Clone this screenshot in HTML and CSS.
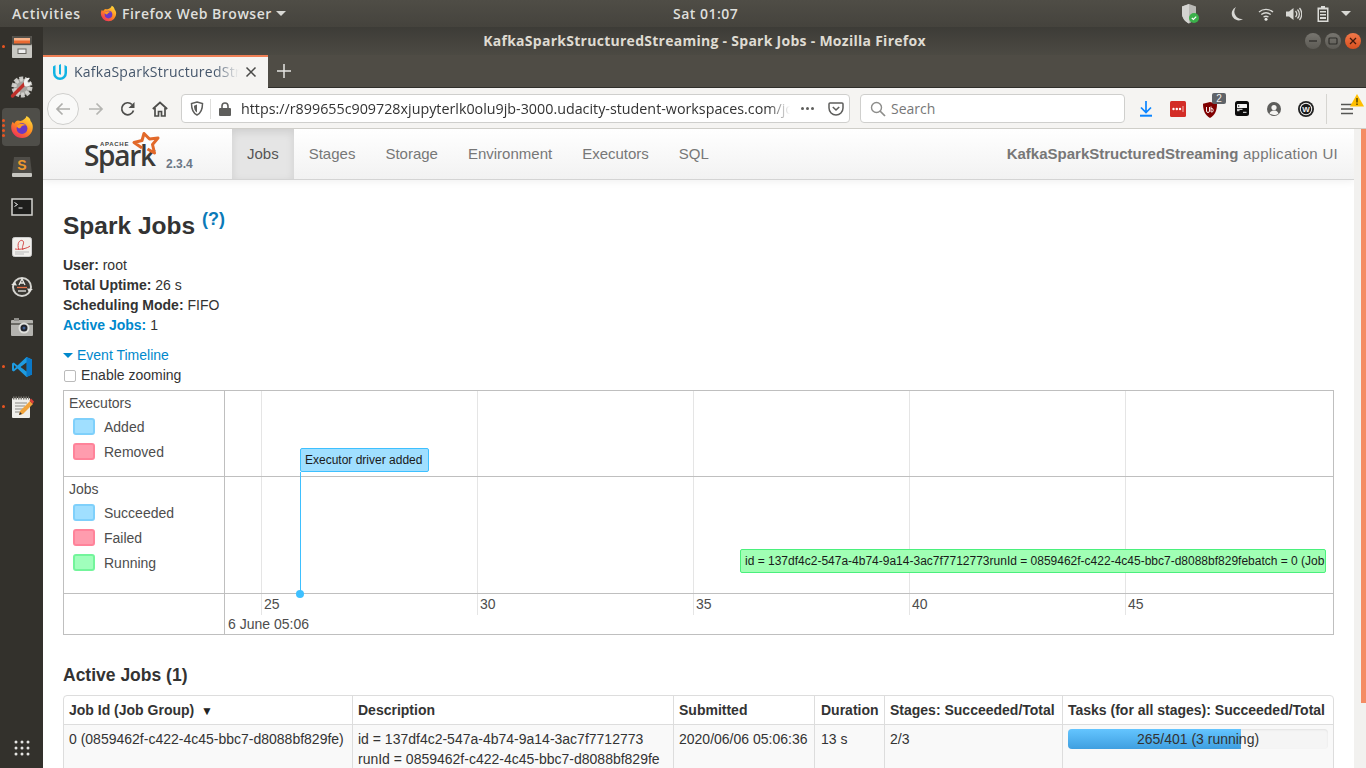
FILE: index.html
```html
<!DOCTYPE html>
<html lang="en">
<head>
<meta charset="utf-8">
<title>KafkaSparkStructuredStreaming - Spark Jobs</title>
<link rel="stylesheet" href="styles.css">
</head>
<body>
<header class="panel">
  <div class="panel-left">
    <span class="activities">Activities</span>
    <span class="appmenu">
      <svg class="ff-small" viewBox="0 0 24 24"><use href="#firefox"/></svg>
      <span>Firefox Web Browser</span>
      <i class="caret"></i>
    </span>
  </div>
  <div class="clock">Sat 01:07</div>
  <div class="tray">
    <svg class="tray-shield" width="20" height="22" viewBox="0 0 20 22"><path d="M9 1l7 2.500v7c0 4.500-3 8-7 10-4-2-7-5.500-7-10v-7z" fill="#b9b9b5"/><path d="M9 1v19.500c-4-2-7-5.500-7-10v-7z" fill="#d4d4d1"/><circle cx="14" cy="15" r="5" fill="#3bb04a"/><path d="M11.800 15l1.600 1.500 2.800-2.800" stroke="#fff" stroke-width="1.200" fill="none"/></svg>
    <svg class="tray-moon" width="14" height="16" viewBox="0 0 14 16"><path d="M6 1a7 7 0 1 0 7 12A7.500 7.500 0 0 1 6 1z" fill="#d8d8d4"/></svg>
    <svg class="tray-wifi" width="16" height="14" viewBox="0 0 16 14"><path d="M1 5c4-3.500 10-3.500 14 0M3.300 7.500c3-2.300 6.400-2.300 9.400 0M5.500 10c1.700-1 3.300-1 5 0" stroke="#d8d8d4" stroke-width="1.400" fill="none"/><circle cx="8" cy="12.300" r="1.500" fill="#e8e8e4"/></svg>
    <svg class="tray-vol" width="16" height="14" viewBox="0 0 16 14"><path d="M0 4.500h3L7.500 1v12L3 9.500H0z" fill="#d8d8d4"/><path d="M9.500 4c1.500 1.700 1.500 4.300 0 6M11.500 2.500c2.500 2.600 2.500 6.400 0 9M13.500 1c3 3.500 3 8.500 0 12" stroke="#d8d8d4" stroke-width="1.300" fill="none"/></svg>
    <svg class="tray-batt" width="12" height="16" viewBox="0 0 12 16"><path d="M4 0h4v1.500h3.500V16H.5V1.500H4z" fill="#dcdcd8"/><path d="M2 3.500h8v11H2z" fill="#44423c"/><path d="M3 5h6v1.500H3zM3 8h6v1.500H3zM3 11h6v2H3z" fill="#dcdcd8"/></svg>
    <i class="caret tray-caret"></i>
  </div>
</header>

<div class="desktop">
  <nav class="dock">
    <div class="dock-item has-dot">
      <svg width="22" height="24" viewBox="0 0 22 24"><rect x="1" y="1" width="20" height="22" rx="2" fill="#b5b4ae"/><rect x="1" y="1" width="20" height="9" rx="1.500" fill="#54514b"/><rect x="3" y="3" width="16" height="3" fill="#f8b48c"/><rect x="3" y="5.500" width="16" height="3" fill="#ea6a32"/><rect x="1" y="11" width="20" height="12" rx="1" fill="#c8c7c2"/><rect x="7" y="14" width="8" height="4.500" fill="#eee" stroke="#66645e"/></svg>
    </div>
    <div class="dock-item">
      <svg width="24" height="24" viewBox="0 0 24 24"><circle cx="12" cy="12" r="8" fill="none" stroke="#c8c7c3" stroke-width="5" stroke-dasharray="3.500 1.500"/><circle cx="12" cy="12" r="8.500" fill="#d5d4d0" opacity=".7"/><path d="M2.500 21L15 8.500" stroke="#c0302b" stroke-width="3.400" stroke-linecap="round"/><path d="M14 9a5 5 0 0 1 6-6l-3 3 1.500 2.500L21.500 7a5 5 0 0 1-7 4z" fill="#f2f2f0"/></svg>
    </div>
    <div class="dock-item is-active">
      <i class="run-dots"></i>
      <svg width="24" height="24" viewBox="0 0 24 24"><use href="#firefox"/></svg>
    </div>
    <div class="dock-item">
      <svg width="22" height="22" viewBox="0 0 22 22"><path d="M3 1h16l2 17H1z" fill="#4f4d48"/><rect x="1" y="17" width="20" height="4" rx="1" fill="#c6c5c0"/><text x="11" y="14" class="sublime-s">S</text></svg>
    </div>
    <div class="dock-item">
      <svg width="22" height="18" viewBox="0 0 22 18"><rect x="1" y="1" width="20" height="16" fill="#1e1e1c" stroke="#d5d4d0" stroke-width="1.500"/><path d="M3.500 4.500l3 2-3 2M7.500 10h4" stroke="#eee" fill="none"/></svg>
    </div>
    <div class="dock-item">
      <svg width="20" height="20" viewBox="0 0 20 20"><rect x=".5" y=".5" width="19" height="19" rx="2" fill="#f1efec" stroke="#ccc"/><path d="M3 12c6 1 13-1 15-3M7 13C4 5 9 2 11 4s-2 6 0 9" stroke="#d44a4a" fill="none"/><path d="M3 15h14M3 17h9" stroke="#bbb"/></svg>
    </div>
    <div class="dock-item">
      <svg width="22" height="22" viewBox="0 0 22 22"><circle cx="11" cy="11" r="9" fill="#3a3833" stroke="#d5d4d0" stroke-width="2"/><path d="M0 9l4-3 2 3.500zM22 13l-4 3-2-3.500z" fill="#e6e5e1"/><path d="M8 9l3-6 3 6M9.500 7h3" stroke="#e8e8e4" stroke-width="1.300" fill="none"/><path d="M6 11.500h10" stroke="#e8734a" stroke-width="1.300"/><path d="M7 15h8" stroke="#e8e8e4" stroke-width="1.300"/></svg>
    </div>
    <div class="dock-item">
      <svg width="22" height="18" viewBox="0 0 22 18"><rect y="2" width="22" height="16" rx="1" fill="#b4b3af"/><rect x="3" y="0" width="5" height="3" fill="#8f8e8a"/><rect y="5" width="22" height="2" fill="#6a6964"/><circle cx="13" cy="10" r="5.500" fill="#dfdfdc"/><circle cx="13" cy="10" r="3.500" fill="#22242c"/><circle cx="13" cy="10" r="1.500" fill="#3f5f92"/></svg>
    </div>
    <div class="dock-item has-dot">
      <svg width="22" height="22" viewBox="0 0 22 22"><path d="M15.500 1L21 3.500v15L15.500 21 6.500 12.500 2.800 15.500 1 14.500v-7l1.800-1 3.700 3z" fill="#1e9be0"/><path d="M15.500 1L21 3.500v15L15.500 21z" fill="#0a78c8"/><path d="M15.500 6.500v9L9.500 11zM3 9l2.200 2L3 13z" fill="#33312c"/></svg>
    </div>
    <div class="dock-item has-dot">
      <svg width="24" height="24" viewBox="0 0 24 24"><rect x="2" y="3" width="18" height="20" rx="1" fill="#efeeea"/><path d="M3 3h16" stroke="#77756f" stroke-width="3" stroke-dasharray="1.500 1"/><path d="M5 8h12M5 11h10M5 14h8M5 17h7" stroke="#8a8984"/><path d="M9 20l1-4L20 6l3 3-10 10z" fill="#f1a33b"/><path d="M19.500 5.500l1.500-2 3 3-1.500 2.500z" fill="#d9403a"/><path d="M9 20l1-3 2 2z" fill="#333"/></svg>
    </div>
    <div class="dock-item dock-apps">
      <svg width="16" height="16" viewBox="0 0 16 16" fill="#e5e5e3"><circle cx="2" cy="2" r="1.500"/><circle cx="8" cy="2" r="1.500"/><circle cx="14" cy="2" r="1.500"/><circle cx="2" cy="8" r="1.500"/><circle cx="8" cy="8" r="1.500"/><circle cx="14" cy="8" r="1.500"/><circle cx="2" cy="14" r="1.500"/><circle cx="8" cy="14" r="1.500"/><circle cx="14" cy="14" r="1.500"/></svg>
    </div>
  </nav>

  <div class="window">
    <div class="titlebar">
      <span></span>
      <span class="wintitle">KafkaSparkStructuredStreaming - Spark Jobs - Mozilla Firefox</span>
      <div class="winbtns">
        <span class="winbtn"><svg width="10" height="10" viewBox="0 0 10 10"><path d="M1 5h8" stroke="#2f2e2a" stroke-width="1.300"/></svg></span>
        <span class="winbtn"><svg width="10" height="10" viewBox="0 0 10 10"><rect x="1" y="2" width="8" height="6" rx="1" fill="none" stroke="#2f2e2a" stroke-width="1.200"/></svg></span>
        <span class="winbtn winclose"><svg width="10" height="10" viewBox="0 0 10 10"><path d="M2 2l6 6M8 2l-6 6" stroke="#40190c" stroke-width="1.300"/></svg></span>
      </div>
    </div>

    <div class="tabstrip">
      <div class="tab">
        <svg class="favicon" width="16" height="16" viewBox="0 0 16 16"><path d="M1 2.500V9a6.800 6.800 0 0 0 14 0V2.500L12.500 1v8a4.500 4.500 0 0 1-9 0V1zM7 1v9l2 .8V0z" fill="#10b3e3"/></svg>
        <span class="tab-title">KafkaSparkStructuredStreaming - Spark Jobs</span>
        <svg class="tab-close" width="12" height="12" viewBox="0 0 12 12"><path d="M1.500 1.500l9 9M10.500 1.500l-9 9" stroke="#4a4a48" stroke-width="1.500"/></svg>
      </div>
      <svg class="tab-new" width="14" height="14" viewBox="0 0 14 14"><path d="M7 0v14M0 7h14" stroke="#e6e5e2" stroke-width="1.500"/></svg>
    </div>

    <div class="toolbar">
      <span class="tool tool-back"><svg width="16" height="14" viewBox="0 0 16 14"><path d="M15 7H2M7.500 1.500L2 7l5.500 5.500" stroke="#aeaeab" stroke-width="1.700" fill="none"/></svg></span>
      <span class="tool"><svg width="16" height="14" viewBox="0 0 16 14"><path d="M1 7h13M8.500 1.500L14 7l-5.500 5.500" stroke="#b5b5b2" stroke-width="1.700" fill="none"/></svg></span>
      <span class="tool"><svg width="16" height="16" viewBox="0 0 16 16"><path d="M13.500 9.500A6 6 0 1 1 12 3.500" stroke="#4d4d4b" stroke-width="1.700" fill="none"/><path d="M14.500 1v6h-6z" fill="#4d4d4b"/></svg></span>
      <span class="tool"><svg width="16" height="16" viewBox="0 0 16 16"><path d="M.8 8L8 1.500 15.200 8M3 7v8h3.500v-4.500h3V15H13V7" stroke="#4d4d4b" stroke-width="1.700" fill="none"/></svg></span>

      <div class="urlbar">
        <svg class="url-shield" width="14" height="15" viewBox="0 0 14 15"><path d="M7 1l5.500 1.500c0 5-1 9.500-5.500 11.500C2.500 12 1.500 7.500 1.500 2.500z" fill="none" stroke="#5e5e5c" stroke-width="1.500"/><path d="M7 3.500v8c-2.400-1.500-3-4-3-6.800z" fill="#5e5e5c"/></svg>
        <i class="url-sep"></i>
        <svg class="url-lock" width="12" height="14" viewBox="0 0 12 14"><rect x="0" y="6" width="12" height="8" rx="1" fill="#5e5e5c"/><path d="M3 6.500V4a3 3 0 0 1 6 0v2.500" stroke="#5e5e5c" stroke-width="1.600" fill="none"/></svg>
        <span class="url-text">https://r899655c909728xjupyterlk0olu9jb-3000.udacity-student-workspaces.com/jobs/</span>
        <span class="url-dots"><i></i><i></i><i></i></span>
        <svg class="url-pocket" width="16" height="14" viewBox="0 0 16 14"><path d="M2 1h12a1 1 0 0 1 1 1v4a7 7 0 0 1-14 0V2a1 1 0 0 1 1-1z" fill="none" stroke="#5e5e5c" stroke-width="1.500"/><path d="M4.800 5L8 8l3.200-3" fill="none" stroke="#5e5e5c" stroke-width="1.600"/></svg>
      </div>

      <div class="searchbar">
        <svg width="16" height="16" viewBox="0 0 16 16"><circle cx="6.500" cy="6.500" r="5" fill="none" stroke="#8d8d8b" stroke-width="1.400"/><path d="M10 10l5 5" stroke="#8d8d8b" stroke-width="1.700"/></svg>
        <span>Search</span>
      </div>

      <span class="tool"><svg width="14" height="16" viewBox="0 0 14 16"><path d="M7 0v11M2 6.500L7 11.500l5-5" stroke="#0a84ff" stroke-width="1.700" fill="none"/><path d="M1 14.700h12" stroke="#0a84ff" stroke-width="2"/></svg></span>
      <span class="tool"><svg width="16" height="16" viewBox="0 0 16 16"><rect width="16" height="16" rx="1.500" fill="#d32d27"/><circle cx="3.500" cy="8" r="1.200" fill="#fff"/><circle cx="6.800" cy="8" r="1.200" fill="#fff"/><circle cx="10" cy="8" r="1.200" fill="#fff"/><path d="M13 5v6" stroke="#f3b5b2"/></svg></span>
      <span class="tool tool-ublock">
        <svg width="14" height="16" viewBox="0 0 14 16"><path d="M7 0l7 1.800c0 6-1.500 11-7 14.200C1.500 12.800 0 7.800 0 1.800z" fill="#800000"/><path d="M3.500 5v4a1.500 1.500 0 0 0 3 0V5M8 4.500v5.500M8 6.500a1.800 1.800 0 1 1 0 3.500" stroke="#f4eaea" fill="none"/></svg>
        <span class="ublock-badge">2</span>
      </span>
      <span class="tool"><svg width="14" height="15" viewBox="0 0 14 15"><rect width="14" height="15" rx="2.500" fill="#0c0c0c"/><rect x="2" y="3" width="10" height="4" rx=".5" fill="#f5f5f5"/><path d="M2 8.300h5.500M2 9.700h2.500M8 11.300h3.500" stroke="#f5f5f5"/><circle cx="3.700" cy="5" r=".7" fill="#0c0c0c"/></svg></span>
      <span class="tool"><svg width="14" height="14" viewBox="0 0 14 14"><circle cx="7" cy="7" r="7" fill="#5e5e5c"/><circle cx="7" cy="5.500" r="2.600" fill="#f5f4f2"/><path d="M2.500 11.500c1-2.500 2.800-3 4.500-3s3.500.5 4.500 3c-2.500 2-6.500 2-9 0z" fill="#f5f4f2"/></svg></span>
      <span class="tool"><svg width="16" height="16" viewBox="0 0 16 16"><circle cx="8" cy="8" r="8" fill="#222"/><circle cx="8" cy="8" r="6.200" fill="#f5f4f2"/><circle cx="8" cy="8" r="5.200" fill="#1a1a1a"/><text x="8" y="11" class="wappa">W</text></svg></span>
      <i class="tool-sep"></i>
      <span class="tool tool-menu">
        <svg width="14" height="12" viewBox="0 0 14 12"><path d="M1 1.500h12M1 6h12M1 10.500h12" stroke="#555553" stroke-width="1.700"/></svg>
        <svg class="menu-warn" width="14" height="13" viewBox="0 0 14 13"><path d="M7 0l7 12.500H0z" fill="#ffbf00"/><path d="M7 4v4.500M7 9.500v1.500" stroke="#4a3b00" stroke-width="1.400"/></svg>
      </span>
    </div>

    <div class="viewport">
      <main class="page">
        <div class="navbar">
          <div class="brand">
            <span class="logo">
              <span class="logo-apache">APACHE</span>
              <span class="logo-spark">Spark</span>
              <svg class="logo-star" width="28" height="26" viewBox="0 0 28 26"><path d="M10 17L2 11.500l8-2L12 2.500 17.500 8 26 7l-5.500 6.500 2 8.500-7-4" fill="none" stroke="#e2692a" stroke-width="3" stroke-linejoin="round"/></svg>
            </span>
            <span class="version">2.3.4</span>
          </div>
          <ul class="navlinks">
            <li class="active">Jobs</li>
            <li>Stages</li>
            <li>Storage</li>
            <li>Environment</li>
            <li>Executors</li>
            <li>SQL</li>
          </ul>
          <p class="appname"><strong>KafkaSparkStructuredStreaming</strong> application UI</p>
        </div>

        <div class="content">
          <h3 class="page-title">Spark Jobs <sup class="help">(?)</sup></h3>
          <ul class="summary">
            <li><strong>User:</strong> root</li>
            <li><strong>Total Uptime:</strong> 26 s</li>
            <li><strong>Scheduling Mode:</strong> FIFO</li>
            <li><strong class="link">Active Jobs:</strong> 1</li>
          </ul>
          <div class="event-toggle"><i class="arrow-down"></i><span class="link">Event Timeline</span></div>
          <label class="zoom-toggle"><i class="checkbox"></i>Enable zooming</label>

          <section class="timeline">
            <div class="legend legend-exec">
              <div class="legend-title">Executors</div>
              <div class="legend-row"><i class="swatch blue"></i>Added</div>
              <div class="legend-row"><i class="swatch red"></i>Removed</div>
            </div>
            <div class="lane lane-exec">
              <div class="event-box">Executor driver added</div>
            </div>
            <div class="legend legend-jobs">
              <div class="legend-title">Jobs</div>
              <div class="legend-row"><i class="swatch blue"></i>Succeeded</div>
              <div class="legend-row"><i class="swatch red"></i>Failed</div>
              <div class="legend-row"><i class="swatch green"></i>Running</div>
            </div>
            <div class="lane lane-jobs">
              <div class="job-box">id = 137df4c2-547a-4b74-9a14-3ac7f7712773runId = 0859462f-c422-4c45-bbc7-d8088bf829febatch = 0 (Job group: 0859462f-c422-4c45-bbc7-d8088bf829fe)</div>
            </div>
            <div class="axis-blank"></div>
            <div class="axis">
              <span class="tick t25">25</span>
              <span class="tick t30">30</span>
              <span class="tick t35">35</span>
              <span class="tick t40">40</span>
              <span class="tick t45">45</span>
              <span class="axis-date">6 June 05:06</span>
            </div>
            <i class="gridline g25"></i>
            <i class="gridline g30"></i>
            <i class="gridline g35"></i>
            <i class="gridline g40"></i>
            <i class="gridline g45"></i>
            <i class="event-stem"></i>
            <i class="event-dot"></i>
          </section>

          <h4 class="section-title">Active Jobs (1)</h4>
          <table class="jobs">
            <colgroup>
              <col class="c-id"><col class="c-desc"><col class="c-sub"><col class="c-dur"><col class="c-stage"><col class="c-task">
            </colgroup>
            <thead>
              <tr>
                <th>Job Id (Job Group) <span class="sort">▼</span></th>
                <th>Description</th>
                <th>Submitted</th>
                <th>Duration</th>
                <th>Stages: Succeeded/Total</th>
                <th>Tasks (for all stages): Succeeded/Total</th>
              </tr>
            </thead>
            <tbody>
              <tr>
                <td>0 (0859462f-c422-4c45-bbc7-d8088bf829fe)</td>
                <td>id = 137df4c2-547a-4b74-9a14-3ac7f7712773<br>runId = 0859462f-c422-4c45-bbc7-d8088bf829fe<br>batch = 0</td>
                <td>2020/06/06 05:06:36</td>
                <td>13 s</td>
                <td>2/3</td>
                <td>
                  <div class="progress">
                    <span class="progress-label">265/401 (3 running)</span>
                    <div class="progress-fill" style="width:66.500%"></div>
                  </div>
                </td>
              </tr>
            </tbody>
          </table>
        </div>
      </main>
      <div class="scrolltrack"><div class="scrollthumb"></div></div>
    </div>
  </div>
</div>

<svg class="defs" width="0" height="0">
  <defs>
    <linearGradient id="ffg" x1="80%" y1="5%" x2="20%" y2="95%"><stop offset="0" stop-color="#ffd53a"/><stop offset=".5" stop-color="#ff8a1f"/><stop offset="1" stop-color="#f0305a"/></linearGradient>
    <symbol id="firefox" viewBox="0 0 24 24">
      <path d="M12 23a10.800 10.800 0 0 1-10.800-11c0-2 .6-4 1.600-5.300l1.400 2C5 7 6.500 5.500 8 5.500c1 .3 1.500.6 2.500.5C13.500 5 16 3.500 16.500 1c3 1.500 4 3.500 4 5 1.500 1.700 2.300 3.800 2.300 6A10.800 10.800 0 0 1 12 23z" fill="url(#ffg)"/>
      <circle cx="12" cy="13.500" r="5.400" fill="#6a38c4"/>
      <path d="M6.500 11c2-2 4-2.500 6.500-2 1 .2 2 .5 2.800 1.500-2.300-.5-4 .3-5 2-1 1.500-2.800 1-4.300-1.500z" fill="#ff9a22"/>
    </symbol>
  </defs>
</svg>
</body>
</html>
```

FILE: styles.css
```css
* { box-sizing: border-box; }
html, body { margin: 0; height: 100%; }
body {
  width: 1366px;
  height: 768px;
  overflow: hidden;
  display: flex;
  flex-direction: column;
  font-family: "Liberation Sans", Arial, sans-serif;
  font-size: 14px;
  line-height: 20px;
  color: #333;
  background: #33312c;
}
i { display: block; font-style: normal; }
ul { list-style: none; margin: 0; padding: 0; }
svg { display: block; flex: none; }
.defs { position: absolute; }

/* GNOME panel */
.panel {
  flex: none;
  height: 27px;
  display: grid;
  grid-template-columns: 673px auto 1fr;
  align-items: center;
  background: linear-gradient(#4f4d46, #45433d);
  color: #dfdfdc;
  font-family: "Open Sans", "Noto Sans", sans-serif;
  font-size: 14px;
  font-weight: 600;
  letter-spacing: .5px;
}
.panel-left { display: flex; align-items: center; padding-left: 12px; }
.activities { width: 88px; letter-spacing: .75px; }
.appmenu { display: flex; align-items: center; gap: 5px; }
.ff-small { width: 17px; height: 17px; }
.caret {
  flex: none;
  width: 10px; height: 5px;
  border-left: 5px solid transparent;
  border-right: 5px solid transparent;
  border-top: 5px solid #d8d8d4;
}
.appmenu .caret { margin-left: -1px; }
.tray { display: flex; align-items: center; justify-content: flex-end; padding-right: 15px; }
.tray-shield { margin-right: 30px; }
.tray-moon { margin-right: 14px; }
.tray-wifi { margin-right: 12px; }
.tray-vol { margin-right: 15px; }
.tray-batt { margin-right: 12px; }

.desktop { flex: 1; display: flex; min-height: 0; }

/* dock */
.dock {
  flex: none;
  width: 43px;
  display: flex;
  flex-direction: column;
  background: #33312c;
}
.dock-item {
  position: relative;
  height: 40px;
  flex: none;
  display: flex;
  align-items: center;
  justify-content: center;
}
.has-dot::before {
  content: "";
  position: absolute;
  left: 2px; top: 18px;
  width: 3px; height: 3px;
  border-radius: 50%;
  background: #e95420;
}
.is-active::after {
  content: "";
  position: absolute;
  left: 2px; right: 3px; top: 1px; bottom: 1px;
  border-radius: 4px;
  background: rgba(255, 255, 255, .14);
}
.is-active svg { position: relative; z-index: 1; }
.run-dots {
  position: absolute;
  left: 2px; top: 12px;
  width: 3px; height: 3px;
  z-index: 2;
  border-radius: 50%;
  background: #e95420;
  box-shadow: 0 5px 0 #e95420, 0 10px 0 #e95420, 0 15px 0 #e95420;
}
.dock-apps { margin-top: auto; }
.sublime-s { font: bold 14px "Liberation Sans", sans-serif; fill: #f09a2e; text-anchor: middle; }

/* window */
.window { flex: 1; min-width: 0; display: flex; flex-direction: column; }
.titlebar {
  flex: none;
  height: 28px;
  display: grid;
  grid-template-columns: 1fr auto 1fr;
  align-items: center;
  background: linear-gradient(#3d3c37, #4c4a43);
  color: #dfdbd2;
  font-family: "Open Sans", "Noto Sans", sans-serif;
  font-size: 14px;
  font-weight: 700;
  letter-spacing: .27px;
}
.winbtns { display: flex; justify-content: flex-end; gap: 4px; padding-right: 5px; }
.winbtn {
  width: 16px; height: 16px;
  border-radius: 50%;
  display: flex; align-items: center; justify-content: center;
  background: linear-gradient(#77756f, #5c5a54);
}
.winclose { background: linear-gradient(#f0784a, #d9501f); }

.tabstrip {
  flex: none;
  height: 33px;
  display: flex;
  align-items: flex-end;
  background: #4f4c45;
  border-bottom: 1px solid #2f2e2a;
}
.tab {
  width: 225px;
  height: 33px;
  margin-bottom: -1px;
  display: flex;
  align-items: center;
  padding: 0 0 2px 9px;
  background: #f5f4f2;
  border-top: 2px solid #ef7f55;
  font-family: "Open Sans", "Noto Sans", sans-serif;
  font-size: 14px;
  color: #45566b;
}
.favicon { margin-right: 6px; }
.tab-title {
  width: 165px;
  overflow: hidden;
  white-space: nowrap;
  letter-spacing: .25px;
  -webkit-mask-image: linear-gradient(90deg, #000 85%, transparent);
  mask-image: linear-gradient(90deg, #000 85%, transparent);
}
.tab-close { margin-left: 6px; }
.tab-new { align-self: center; margin: 0 0 0 9px; }

/* toolbar */
.toolbar {
  flex: none;
  height: 41px;
  display: flex;
  align-items: center;
  padding: 1px 0 0 4px;
  background: #f5f4f2;
  border-bottom: 1px solid #cfcec9;
  font-family: "Open Sans", "Noto Sans", sans-serif;
}
.tool {
  position: relative;
  flex: none;
  width: 32px;
  height: 32px;
  display: flex;
  align-items: center;
  justify-content: center;
}
.tool-back { margin-right: 1px; border: 1px solid #cfcfcd; border-radius: 50%; background: #f9f9f8; }
.tool-sep { width: 1px; height: 30px; margin: 0 4px; background: #d6d5d1; }
.ublock-badge {
  position: absolute;
  left: 18px; top: 0;
  width: 14px; height: 11px;
  border-radius: 2px;
  background: #5f6368;
  color: #f2f2f2;
  font: 10px/11px "Liberation Sans", sans-serif;
  text-align: center;
}
.tool-ublock svg { margin-top: 3px; }
.wappa { font: bold 8px "Liberation Sans", sans-serif; fill: #f5f4f2; text-anchor: middle; }
.menu-warn { position: absolute; left: 19px; top: 1px; }

.urlbar {
  flex: none;
  width: 669px;
  height: 29px;
  margin-left: 5px;
  display: flex;
  align-items: center;
  padding-left: 8px;
  background: #fff;
  border: 1px solid #cfcfcd;
  border-radius: 4px;
}
.url-sep { width: 1px; height: 20px; margin: 0 8px 0 6px; background: #dededc; }
.url-lock { margin-right: 10px; }
.url-text {
  width: 549px;
  overflow: hidden;
  white-space: nowrap;
  font-size: 14.300px;
  color: #333;
  -webkit-mask-image: linear-gradient(90deg, #000 96%, transparent);
  mask-image: linear-gradient(90deg, #000 96%, transparent);
}
.url-dots { display: flex; gap: 2px; margin-left: 11px; }
.url-dots i { width: 3px; height: 3px; border-radius: 50%; background: #5e5e5c; }
.url-pocket { margin-left: 14px; }

.searchbar {
  flex: none;
  width: 265px;
  height: 29px;
  margin: 0 5px 0 10px;
  display: flex;
  align-items: center;
  gap: 5px;
  padding-left: 9px;
  background: #fff;
  border: 1px solid #cfcfcd;
  border-radius: 4px;
  font-size: 14px;
  color: #777;
}

/* viewport */
.viewport { flex: 1; min-height: 0; display: flex; overflow: hidden; background: #fff; }
.page { flex: 1; min-width: 0; overflow: hidden; }
.scrolltrack { flex: none; width: 12px; background: #f2f1ef; }
.scrollthumb { width: 5px; height: 574px; margin-left: 7px; background: #f48c64; }

/* spark navbar */
.navbar {
  height: 51px;
  display: flex;
  align-items: stretch;
  background: linear-gradient(#fff, #f2f2f2);
  border-bottom: 1px solid #d4d4d4;
  box-shadow: 0 1px 8px rgba(0, 0, 0, .07);
  font-size: 15px;
  color: #777;
}
.brand { width: 189px; flex: none; display: flex; padding-left: 41px; }
.logo { position: relative; display: block; width: 82px; }
.logo-spark {
  position: absolute;
  left: 0; top: 19px;
  font: 600 28px/14px "Open Sans", sans-serif;
  letter-spacing: -1.300px;
  color: #3b3a38;
}
.logo-apache {
  position: absolute;
  left: 16px; top: 13px;
  font: bold 6px/5px "Liberation Sans", sans-serif;
  letter-spacing: .7px;
  color: #444;
}
.logo-star { position: absolute; left: 48px; top: 2px; }
.version { margin-top: 25px; font-size: 12px; font-weight: bold; color: #6b7785; }
.navlinks { display: flex; }
.navlinks li { padding: 15px 15px 0; }
.navlinks .active { background: #e5e5e5; box-shadow: inset 0 3px 8px rgba(0, 0, 0, .1); color: #555; }
.appname { margin: 0 0 0 auto; padding: 15px 16px 0 0; letter-spacing: .3px; }
.appname strong { letter-spacing: 0; }

/* content */
.content { padding: 0 20px; }
.page-title { margin: 26px 0 0; font-size: 24.500px; line-height: 40px; font-weight: bold; color: #333; }
.help { font-size: 18px; line-height: 0; vertical-align: 9px; color: #0b7ab8; }
.summary { margin-top: 9px; }
.summary strong { font-weight: bold; }
.link { color: #0088cc; }
.event-toggle { margin-top: 10px; display: flex; align-items: center; }
.arrow-down {
  width: 0; height: 0;
  margin-right: 4px;
  border-left: 5px solid transparent;
  border-right: 5px solid transparent;
  border-top: 5px solid #0088cc;
}
.zoom-toggle { display: flex; align-items: center; }
.checkbox {
  width: 12px; height: 12px;
  margin: 1px 5px 0 1px;
  background: #fff;
  border: 1px solid #bbb;
  border-radius: 2px;
}

/* timeline */
.timeline {
  position: relative;
  margin-top: 5px;
  height: 245px;
  display: grid;
  grid-template-columns: 161px 1fr;
  grid-template-rows: 86px 117px 40px;
  border: 1px solid #bfbfbf;
  color: #4d4d4d;
}
.legend { border-right: 1px solid #bfbfbf; border-bottom: 1px solid #bfbfbf; padding: 2px 0 0 5px; }
.legend-title { height: 20px; margin-bottom: 1px; }
.legend-row { height: 25px; display: flex; align-items: center; padding-left: 4px; }
.swatch { width: 22px; height: 17px; margin-right: 9px; border-radius: 3px; border: 2px solid; }
.blue { background: #a0dfff; border-color: #7fd0fb; }
.red { background: #ff9cae; border-color: #ff839a; }
.green { background: #a0ffbc; border-color: #73f59b; }
.lane { position: relative; border-bottom: 1px solid #bfbfbf; z-index: 1; }
.axis-blank { border-right: 1px solid #bfbfbf; }
.axis { position: relative; }
.event-box {
  position: absolute;
  left: 75px; top: 57px;
  width: 129px; height: 24px;
  padding-left: 4px;
  background: #a0dfff;
  border: 1px solid #3ec0ff;
  border-radius: 2px;
  color: #1a1a1a;
  font-size: 12px;
  line-height: 22px;
}
.job-box {
  position: absolute;
  left: 515px; top: 72px;
  width: 586px; height: 24px;
  padding-left: 4px;
  overflow: hidden;
  white-space: nowrap;
  background: #a0ffb4;
  border: 1px solid #4af07c;
  border-radius: 2px;
  color: #1a1a1a;
  font-size: 12px;
  line-height: 22px;
}
.tick { position: absolute; top: 0; line-height: 20px; }
.t25 { left: 39px; }
.t30 { left: 255px; }
.t35 { left: 471px; }
.t40 { left: 687px; }
.t45 { left: 903px; }
.axis-date { position: absolute; left: 3px; top: 20px; }
.gridline { position: absolute; top: 0; width: 1px; height: 224px; background: #e5e5e5; }
.g25 { left: 197px; }
.g30 { left: 413px; }
.g35 { left: 629px; }
.g40 { left: 845px; }
.g45 { left: 1061px; }
.event-stem { position: absolute; left: 236px; top: 81px; width: 1px; height: 122px; background: #3ec0ff; z-index: 2; }
.event-dot { position: absolute; left: 232px; top: 199px; width: 8px; height: 8px; border-radius: 50%; background: #3ec0ff; z-index: 2; }

/* jobs table */
.section-title { margin: 30px 0 10px; font-size: 17.500px; line-height: 20px; font-weight: bold; color: #333; }
.jobs {
  width: 1271px;
  table-layout: fixed;
  border-collapse: separate;
  border-spacing: 0;
  border: 1px solid #ddd;
  border-radius: 4px;
}
.c-id { width: 288px; }
.c-desc { width: 321px; }
.c-sub { width: 141px; }
.c-dur { width: 70px; }
.c-stage { width: 178px; }
.c-task { width: 271px; }
.jobs th, .jobs td { padding: 4px 5px; text-align: left; vertical-align: top; white-space: nowrap; }
.jobs th { font-weight: bold; border-bottom: 1px solid #ddd; }
.jobs td { background: #f9f9f9; }
.jobs th + th, .jobs td + td { border-left: 1px solid #ddd; }
.jobs th:nth-child(4), .jobs td:nth-child(4) { padding-left: 6px; }
.sort { font-size: 12px; line-height: 14px; margin-left: 3px; color: #222; }
.progress {
  position: relative;
  width: 260px;
  height: 20px;
  overflow: hidden;
  border-radius: 4px;
  background: #f5f5f5;
  box-shadow: inset 0 1px 2px rgba(0, 0, 0, .08);
}
.progress-fill { height: 20px; background: linear-gradient(#64c5ff, #3f9fe0); }
.progress-label { position: absolute; left: 0; right: 0; top: 0; text-align: center; z-index: 1; color: #333; }
```
